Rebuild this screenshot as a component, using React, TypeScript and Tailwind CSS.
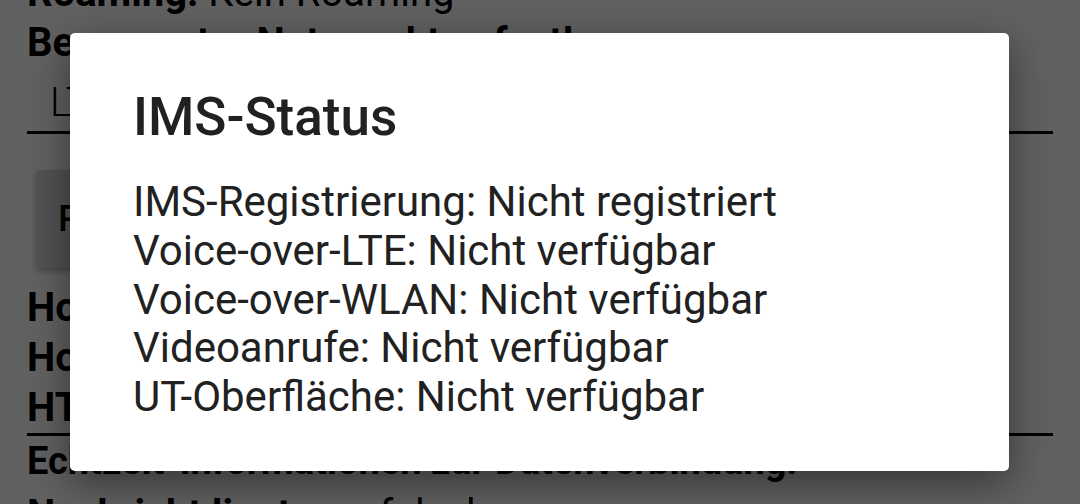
import React from 'react';

const font = { fontFamily: 'Roboto, "Noto Sans", sans-serif' };

const statusLines = [
  'IMS-Registrierung: Nicht registriert',
  'Voice-over-LTE: Nicht verfügbar',
  'Voice-over-WLAN: Nicht verfügbar',
  'Videoanrufe: Nicht verfügbar',
  'UT-Oberfläche: Nicht verfügbar',
];

function InfoLine({ label, value }: { label: string; value?: string }) {
  return (
    <div className="whitespace-nowrap text-[40px] leading-[50px] text-black">
      <span className="font-bold">{label}</span>
      {value && <span className="font-normal"> {value}</span>}
    </div>
  );
}

export default function App() {
  return (
    <div className="relative h-[504px] w-[1080px] overflow-hidden bg-white font-['Roboto',sans-serif]">
      {/* settings page underneath */}
      <div className="-mt-[32px] flex flex-col px-[27px]">
        <InfoLine label="Roaming:" value="Kein Roaming" />
        <InfoLine label="Bevorzugter Netzwerktyp festlegen:" />
        <div className="border-b-[3px] border-black pl-[23px] pt-[10px] pb-[3px]">
          <div className="text-[40px] font-light leading-[50px] text-black">LTE/UMTS/GSM</div>
        </div>
        <div className="mt-[36px] ml-[9px] flex h-[98px] w-[620px] items-center rounded-[5px] bg-[#d8d8d8] px-[22px] shadow-[0_3px_6px_rgba(0,0,0,0.3)]">
          <span className="text-[37px] font-medium uppercase text-black">Ping-Test ausführen</span>
        </div>
        <div className="mt-[15px]">
          <InfoLine label="Hostname (www.google.com) IPv4-Ping:" value="" />
          <InfoLine label="Hostname (www.google.com) IPv6-Ping:" value="" />
          <InfoLine label="HTTP-Client-Test:" value="" />
        </div>
        <div className="h-[3px] bg-black" />
        <div className="whitespace-nowrap text-[38px] font-bold leading-[50px] text-black">
          Echtzeit-Informationen zur Datenverbindung:
        </div>
        <div className="mt-[4px]">
          <InfoLine label="Nachricht liegt vor:" value="falsch" />
        </div>
      </div>

      {/* scrim */}
      <div className="absolute inset-0 bg-black/[0.62]" />

      {/* dialog */}
      <div
        className="absolute left-[70px] top-[33px] flex h-[438px] w-[939px] flex-col rounded-[5px] bg-white pl-[63px] pt-[54px] shadow-[0_12px_40px_rgba(0,0,0,0.45)]"
        style={font}
      >
        <h2 className="text-[53px] font-medium leading-[61px] text-[#212121]">IMS-Status</h2>
        <div className="mt-[30px] flex flex-col">
          {statusLines.map((line) => (
            <div key={line} className="whitespace-nowrap text-[42px] leading-[48.75px] text-[#212121]">
              {line}
            </div>
          ))}
        </div>
      </div>
    </div>
  );
}
